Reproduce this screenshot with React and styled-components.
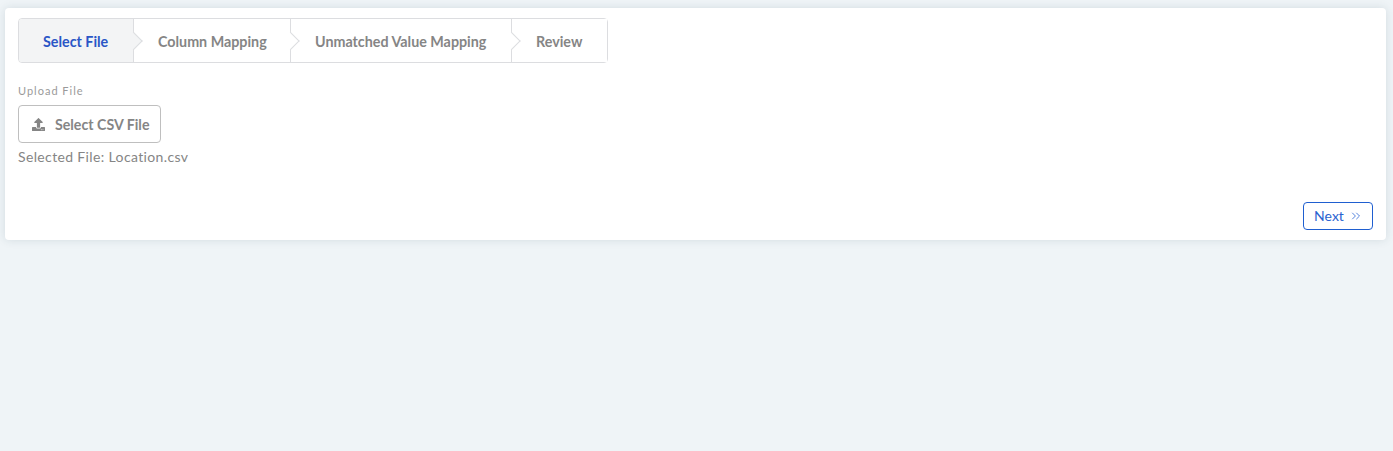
import React from 'react';
import styled, { createGlobalStyle } from 'styled-components';
import { FaUpload } from 'react-icons/fa';
import { ChevronsRight } from 'lucide-react';

const GlobalStyle = createGlobalStyle`
  html, body {
    margin: 0;
    height: 100%;
    background: #eff4f7;
  }
  body {
    font-family: 'Lato', 'Liberation Sans', sans-serif;
  }
`;

const Page = styled.div`
  min-height: 451px;
  box-sizing: border-box;
  padding: 8px 7px 0 5px;
`;

const Card = styled.div`
  height: 232px;
  box-sizing: border-box;
  padding: 10px 13px 10px;
  background: #fff;
  border-radius: 4px;
  box-shadow: 0 0 10px rgba(34, 60, 80, 0.13);
  display: flex;
  flex-direction: column;
`;

const Steps = styled.div`
  display: inline-flex;
  align-self: flex-start;
  height: 45px;
  box-sizing: border-box;
  border: 1px solid #dcdde0;
  border-radius: 4px;
`;

const Step = styled.div`
  position: relative;
  display: flex;
  align-items: center;
  height: 100%;
  box-sizing: border-box;
  width: ${(p) => p.$width}px;
  padding: 1px 0 0 ${(p) => p.$pad}px;
  font-size: 14.3px;
  font-weight: 700;
  color: ${(p) => (p.$active ? '#2a56c6' : '#858585')};
  background: ${(p) => (p.$active ? '#f3f4f5' : '#fff')};
  border-right: ${(p) => (p.$last ? 'none' : '1px solid #dcdde0')};
  border-radius: ${(p) => (p.$active ? '3px 0 0 3px' : '0')};

  &::after {
    content: ${(p) => (p.$last ? 'none' : "''")};
    position: absolute;
    z-index: 1;
    top: 50%;
    right: -7px;
    width: 13px;
    height: 13px;
    box-sizing: border-box;
    background: ${(p) => (p.$active ? '#f3f4f5' : '#fff')};
    border-style: solid;
    border-color: #dcdde0;
    border-width: 1px 1px 0 0;
    transform: translateY(-50%) rotate(45deg);
  }
`;

const UploadLabel = styled.div`
  margin-top: 21px;
  font-size: 11px;
  line-height: 14px;
  letter-spacing: 1px;
  color: #9a9a9a;
`;

const SelectButton = styled.button`
  margin-top: 7px;
  align-self: flex-start;
  width: 143px;
  height: 38px;
  box-sizing: border-box;
  padding: 0 0 0 13px;
  display: flex;
  align-items: center;
  gap: 10px;
  background: #fff;
  border: 1px solid #bfbfbf;
  border-radius: 4px;
  font-family: inherit;
  font-size: 14.2px;
  font-weight: 700;
  color: #858585;
`;

const SelectedFile = styled.div`
  margin-top: 5px;
  font-size: 14px;
  line-height: 17px;
  letter-spacing: 0.36px;
  color: #858585;
`;

const Footer = styled.div`
  margin-top: auto;
  display: flex;
  justify-content: flex-end;
`;

const NextButton = styled.button`
  width: 70px;
  height: 28px;
  box-sizing: border-box;
  padding: 0 0 2px 1px;
  display: flex;
  align-items: center;
  justify-content: center;
  gap: 5px;
  background: #fff;
  border: 1px solid #1f5fd0;
  border-radius: 4px;
  font-family: inherit;
  font-size: 14px;
  color: #2a63d0;

  svg {
    margin-top: 1px;
    color: #3f73d8;
  }
`;

const steps = [
  { label: 'Select File', width: 115, pad: 24, active: true },
  { label: 'Column Mapping', width: 157, pad: 24 },
  { label: 'Unmatched Value Mapping', width: 221, pad: 24 },
  { label: 'Review', width: 95, pad: 24, last: true },
];

const App = () => (
  <>
    <GlobalStyle />
    <Page>
      <Card>
        <Steps>
          {steps.map((s) => (
            <Step key={s.label} $width={s.width} $pad={s.pad} $active={s.active} $last={s.last}>
              {s.label}
            </Step>
          ))}
        </Steps>
        <UploadLabel>Upload File</UploadLabel>
        <SelectButton>
          <FaUpload size={13} />
          Select CSV File
        </SelectButton>
        <SelectedFile>Selected File: Location.csv</SelectedFile>
        <Footer>
          <NextButton>
            Next
            <ChevronsRight size={14} strokeWidth={1.5} />
          </NextButton>
        </Footer>
      </Card>
    </Page>
  </>
);

export default App;
